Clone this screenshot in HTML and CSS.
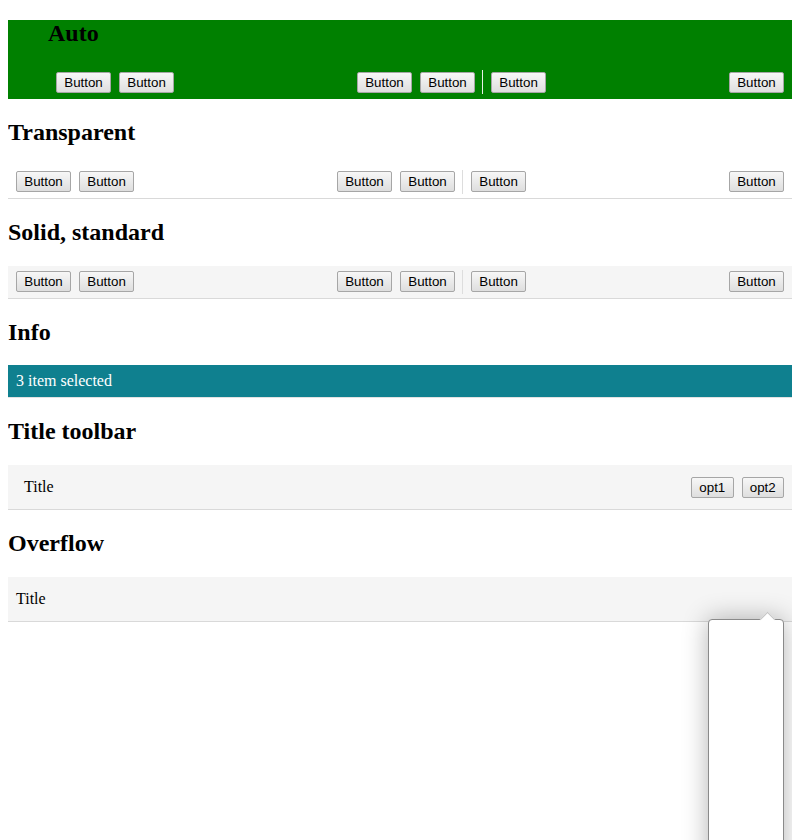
FILE: index.html
```html
<!DOCTYPE html>
<html>
<head>
<meta charset="utf-8">
<link rel="stylesheet" href="styles.css">
</head>
<body>
<section class="auto">
  <h2 class="auto-title">Auto</h2>
  <div class="toolbar">
    <div class="group">
      <button class="btn">Button</button>
      <button class="btn">Button</button>
    </div>
    <div class="group">
      <button class="btn">Button</button>
      <button class="btn">Button</button>
      <span class="sep sep-light"></span>
      <button class="btn">Button</button>
    </div>
    <div class="group">
      <button class="btn">Button</button>
    </div>
  </div>
</section>

<h2>Transparent</h2>
<div class="toolbar bordered">
  <div class="group">
    <button class="btn">Button</button>
    <button class="btn">Button</button>
  </div>
  <div class="group">
    <button class="btn">Button</button>
    <button class="btn">Button</button>
    <span class="sep"></span>
    <button class="btn">Button</button>
  </div>
  <div class="group">
    <button class="btn">Button</button>
  </div>
</div>

<h2>Solid, standard</h2>
<div class="toolbar bordered solid">
  <div class="group">
    <button class="btn">Button</button>
    <button class="btn">Button</button>
  </div>
  <div class="group">
    <button class="btn">Button</button>
    <button class="btn">Button</button>
    <span class="sep"></span>
    <button class="btn">Button</button>
  </div>
  <div class="group">
    <button class="btn">Button</button>
  </div>
</div>

<h2>Info</h2>
<div class="info">3 item selected</div>

<h2>Title toolbar</h2>
<div class="title-bar solid bordered wide">
  <span class="title">Title</span>
  <div class="group">
    <button class="btn">opt1</button>
    <button class="btn">opt2</button>
  </div>
</div>

<h2>Overflow</h2>
<div class="title-bar solid bordered overflow">
  <span class="title">Title</span>
  <div class="popover">
    <span class="arrow"></span>
  </div>
</div>
</body>
</html>
```

FILE: styles.css
```css
html, body {
  background: #fff;
}
body {
  margin: 8px;
  padding-bottom: 320px;
  font-family: "Liberation Serif", "Times New Roman", serif;
  font-size: 16px;
  color: #000;
}
h2 {
  font-size: 24px;
  line-height: 27px;
  font-weight: bold;
  margin: 19.92px 0;
}
.auto {
  margin-top: 12px;
  background: #008000;
  padding: 0 0 1px 40px;
}
.auto h2.auto-title {
  margin: 0 0 19px 0;
}
.toolbar {
  display: flex;
  justify-content: space-between;
  align-items: center;
  height: 32px;
  padding: 0 8px;
}
.bordered {
  border-bottom: 1px solid #d9d9d9;
}
.solid {
  background: #f5f5f5;
}
.group {
  display: flex;
  align-items: center;
  gap: 8px;
}
.btn {
  font-family: "Liberation Sans", Arial, sans-serif;
  font-size: 13.333px;
  color: #000;
  height: 21px;
  padding: 0 7.25px;
  border: 1px solid #a6a6a6;
  border-radius: 2px;
  background: linear-gradient(#f7f7f7, #dedede);
  line-height: 19px;
  margin: 0;
}
.sep {
  display: block;
  width: 1px;
  height: 24px;
  background: #dddddd;
  margin-left: -1px;
}
.sep-light {
  background: #e8f0e8;
}
.info {
  background: #0f808f;
  color: #fff;
  height: 32px;
  line-height: 32px;
  padding: 0 8px;
  border-bottom: 1px solid #e2e2e2;
}
.title-bar {
  display: flex;
  align-items: center;
  justify-content: space-between;
  height: 44px;
  padding: 0 8px;
}
.title-bar.wide {
  padding-left: 16px;
}
.overflow {
  position: relative;
}
.popover {
  position: absolute;
  top: 42px;
  right: 8px;
  width: 74px;
  height: 280px;
  background: #fff;
  border: 1px solid #8a8a8a;
  border-radius: 4px;
  box-shadow: 0 0 26px rgba(0, 0, 0, 0.3);
}
.arrow {
  position: absolute;
  top: -6px;
  left: 53px;
  width: 10px;
  height: 10px;
  background: #fff;
  border-top: 1px solid #c4c4c4;
  border-left: 1px solid #c4c4c4;
  transform: rotate(45deg);
}
```
